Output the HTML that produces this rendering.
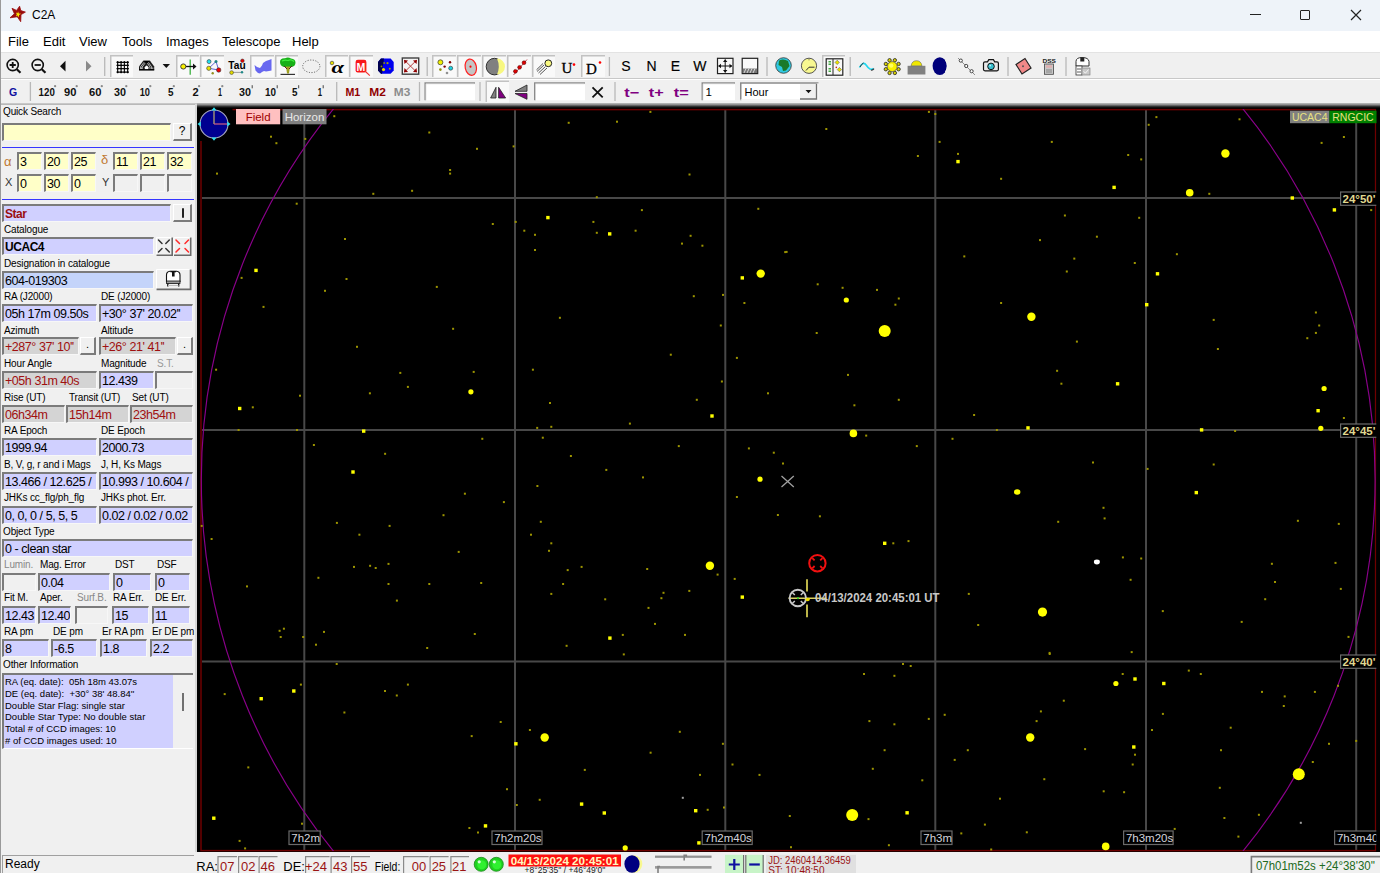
<!DOCTYPE html>
<html><head><meta charset="utf-8">
<style>
*{margin:0;padding:0;box-sizing:border-box}
html,body{width:1380px;height:873px;overflow:hidden;background:#f0f0f0;font-family:"Liberation Sans",sans-serif;position:relative}
.a{position:absolute}
#title{left:0;top:0;width:1380px;height:31px;background:#eef3f9}
#menu{left:0;top:31px;width:1380px;height:21px;background:#fff}
.mi{position:absolute;top:34px;font-size:13px;color:#000}
#tb{left:0;top:52px;width:1380px;height:52px;background:#f0f0f0;border-top:1px solid #e3e3e3}
.sep1{position:absolute;width:1px;background:#b4b4b4}
.lbl{position:absolute;font-size:10px;letter-spacing:-0.15px;color:#000;white-space:nowrap;line-height:12px}
.box{position:absolute;border-top:2px solid #7b7b7b;border-left:2px solid #7b7b7b;border-right:1px solid #f7f7f7;border-bottom:1px solid #f7f7f7;font-size:12.5px;letter-spacing:-0.45px;line-height:16px;padding-left:1px;white-space:nowrap;overflow:hidden;color:#000}
.y{background:#ffffc8}
.b{background:#d0d0ff}
.lb{background:#c4d4fa}
.g{background:#d4d4d4;color:#a01010}
.e{background:#f0f0f0}
.btn{position:absolute;background:#f0f0f0;border-top:1px solid #fff;border-left:1px solid #fff;border-right:2px solid #7b7b7b;border-bottom:2px solid #7b7b7b;font-size:12px;text-align:center;line-height:14px}
.bl{position:absolute;height:1px;background:#3535ff}
#chart{left:197px;top:105px;width:1183px;height:747px;background:#000}
#status{left:0;top:852px;width:1380px;height:21px;background:#f0f0f0}
.sb{position:absolute;top:857px;height:16px;border-top:1px solid #a0a0a0;border-left:1px solid #a0a0a0;background:#f0f0f0;color:#9a1414;font-size:12px;line-height:15px;text-align:right;padding-right:2px}
.st{position:absolute;font-size:12px;color:#000;top:857px;line-height:15px}
</style></head><body>
<!-- title bar -->
<div id="title" class="a"></div>
<svg class="a" style="left:0;top:0" width="34" height="30" viewBox="0 0 34 30"><path d="M19.6 6.2L20.8 10.6L25.4 12.1L21 14.6L20.7 21.7L17.3 16.8L10 17.8L14.4 13.8L12 8.3L16.6 10.4Z" fill="#9a0c0c" stroke="#9a0c0c" stroke-width="0.8" stroke-linejoin="round"/><path d="M18 11.2L18.8 13.4L21.2 13.8L19 15L19 17.4L17.6 15.6L15.8 16.2L16.8 14.4L16 12.6L17.6 13.2Z" fill="#f8e800"/></svg>
<div class="a" style="left:32px;top:8px;font-size:12px;color:#000">C2A</div>
<div class="a" style="left:1250px;top:14px;width:11px;height:1px;background:#222"></div>
<div class="a" style="left:1300px;top:10px;width:10px;height:10px;border:1px solid #222;border-radius:1px"></div>
<svg class="a" style="left:1350px;top:9px" width="12" height="12"><path d="M1 1L11 11M11 1L1 11" stroke="#222" stroke-width="1.2"/></svg>
<!-- menu -->
<div id="menu" class="a"></div>
<div class="mi" style="left:8px">File</div>
<div class="mi" style="left:43px">Edit</div>
<div class="mi" style="left:79px">View</div>
<div class="mi" style="left:122px">Tools</div>
<div class="mi" style="left:166px">Images</div>
<div class="mi" style="left:222px">Telescope</div>
<div class="mi" style="left:292px">Help</div>
<!-- toolbar -->
<div id="tb" class="a"></div>
<div class="a" style="left:0;top:78px;width:1380px;height:1px;background:#c8c8c8"></div>
<div class="a" style="left:0;top:79px;width:1380px;height:1px;background:#fff"></div>
<div class="a" style="left:0;top:103px;width:1380px;height:1px;background:#c8c8c8"></div>
<div class="a" style="left:197px;top:103px;width:1183px;height:5px;background:linear-gradient(#c0c0c0,#8a8a8a 35%,#303030 70%,#000)"></div>
<!--TB--><svg class="a" style="left:0;top:52px" width="1380" height="52" viewBox="0 52 1380 52"><rect x="110" y="55" width="23" height="22" fill="#f9f9f9"/><path d="M110.75 77V55.75H133" stroke="#c2c2c2" stroke-width="1.5" fill="none"/><rect x="176" y="55" width="23" height="22" fill="#f9f9f9"/><path d="M176.75 77V55.75H199" stroke="#c2c2c2" stroke-width="1.5" fill="none"/><rect x="200" y="55" width="24" height="22" fill="#f9f9f9"/><path d="M200.75 77V55.75H224" stroke="#c2c2c2" stroke-width="1.5" fill="none"/><rect x="250" y="55" width="24" height="22" fill="#f9f9f9"/><path d="M250.75 77V55.75H274" stroke="#c2c2c2" stroke-width="1.5" fill="none"/><rect x="275" y="55" width="23" height="22" fill="#f9f9f9"/><path d="M275.75 77V55.75H298" stroke="#c2c2c2" stroke-width="1.5" fill="none"/><rect x="325" y="55" width="23" height="22" fill="#f9f9f9"/><path d="M325.75 77V55.75H348" stroke="#c2c2c2" stroke-width="1.5" fill="none"/><rect x="349" y="55" width="24" height="22" fill="#f9f9f9"/><path d="M349.75 77V55.75H373" stroke="#c2c2c2" stroke-width="1.5" fill="none"/><rect x="432" y="55" width="24" height="22" fill="#f9f9f9"/><path d="M432.75 77V55.75H456" stroke="#c2c2c2" stroke-width="1.5" fill="none"/><rect x="457" y="55" width="24" height="22" fill="#f9f9f9"/><path d="M457.75 77V55.75H481" stroke="#c2c2c2" stroke-width="1.5" fill="none"/><rect x="482" y="55" width="24" height="22" fill="#f9f9f9"/><path d="M482.75 77V55.75H506" stroke="#c2c2c2" stroke-width="1.5" fill="none"/><rect x="507" y="55" width="24" height="22" fill="#f9f9f9"/><path d="M507.75 77V55.75H531" stroke="#c2c2c2" stroke-width="1.5" fill="none"/><rect x="532" y="55" width="23" height="22" fill="#f9f9f9"/><path d="M532.75 77V55.75H555" stroke="#c2c2c2" stroke-width="1.5" fill="none"/><rect x="581" y="55" width="24" height="22" fill="#f9f9f9"/><path d="M581.75 77V55.75H605" stroke="#c2c2c2" stroke-width="1.5" fill="none"/><rect x="822" y="55" width="23" height="22" fill="#f9f9f9"/><path d="M822.75 77V55.75H845" stroke="#c2c2c2" stroke-width="1.5" fill="none"/><rect x="485.5" y="80.5" width="23.5" height="22" fill="#f9f9f9"/><path d="M486.25 102V81.25H509" stroke="#c2c2c2" stroke-width="1.5" fill="none"/><line x1="104.7" y1="57" x2="104.7" y2="76" stroke="#b8b8b8" stroke-width="1.3"/><line x1="427.2" y1="57" x2="427.2" y2="76" stroke="#b8b8b8" stroke-width="1.3"/><line x1="609.4" y1="57" x2="609.4" y2="76" stroke="#b8b8b8" stroke-width="1.3"/><line x1="767" y1="57" x2="767" y2="76" stroke="#b8b8b8" stroke-width="1.3"/><line x1="850.2" y1="57" x2="850.2" y2="76" stroke="#b8b8b8" stroke-width="1.3"/><line x1="1008" y1="57" x2="1008" y2="76" stroke="#b8b8b8" stroke-width="1.3"/><line x1="1066" y1="57" x2="1066" y2="76" stroke="#b8b8b8" stroke-width="1.3"/><line x1="30.4" y1="82" x2="30.4" y2="101" stroke="#b8b8b8" stroke-width="1.3"/><line x1="336.7" y1="82" x2="336.7" y2="101" stroke="#b8b8b8" stroke-width="1.3"/><line x1="419.5" y1="82" x2="419.5" y2="101" stroke="#b8b8b8" stroke-width="1.3"/><line x1="480" y1="82" x2="480" y2="101" stroke="#b8b8b8" stroke-width="1.3"/><line x1="615" y1="82" x2="615" y2="101" stroke="#b8b8b8" stroke-width="1.3"/><circle cx="12.7" cy="65" r="5.6" fill="none" stroke="#111" stroke-width="1.6"/><path d="M16.8 69.2L20.5 72.8" stroke="#111" stroke-width="2.2"/><path d="M9.6 65H15.8M12.7 61.9V68.1" stroke="#111" stroke-width="1.8"/><circle cx="37.7" cy="65" r="5.6" fill="none" stroke="#111" stroke-width="1.6"/><path d="M41.8 69.2L45.5 72.8" stroke="#111" stroke-width="2.2"/><path d="M34.6 65H40.8" stroke="#111" stroke-width="1.8"/><path d="M60 66.2L65.5 60.7V71.6Z" fill="#111"/><path d="M91.5 66.2L86 60.7V71.6Z" fill="#8a8a8a"/><path d="M117.65 61.2V73.2M121.1 61.2V73.2M124.4 61.2V73.2M127.65 61.2V73.2M116.6 62.3H128.8M116.6 65.35H128.8M116.6 68.6H128.8M116.6 72.1H128.8" stroke="#111" stroke-width="1.15" fill="none"/><circle cx="117.65" cy="62.3" r="0.95" fill="#000"/><circle cx="117.65" cy="65.35" r="0.95" fill="#000"/><circle cx="117.65" cy="68.6" r="0.95" fill="#000"/><circle cx="117.65" cy="72.1" r="0.95" fill="#000"/><circle cx="121.1" cy="62.3" r="0.95" fill="#000"/><circle cx="121.1" cy="65.35" r="0.95" fill="#000"/><circle cx="121.1" cy="68.6" r="0.95" fill="#000"/><circle cx="121.1" cy="72.1" r="0.95" fill="#000"/><circle cx="124.4" cy="62.3" r="0.95" fill="#000"/><circle cx="124.4" cy="65.35" r="0.95" fill="#000"/><circle cx="124.4" cy="68.6" r="0.95" fill="#000"/><circle cx="124.4" cy="72.1" r="0.95" fill="#000"/><circle cx="127.65" cy="62.3" r="0.95" fill="#000"/><circle cx="127.65" cy="65.35" r="0.95" fill="#000"/><circle cx="127.65" cy="68.6" r="0.95" fill="#000"/><circle cx="127.65" cy="72.1" r="0.95" fill="#000"/><path d="M139 70.3V66.5L143.2 60.8H150L154.2 66.5V70.3Z" fill="#1c1c1c"/><path d="M140.6 69V66.8L144 62.3M142.2 69V67L145 63.2M151.6 69V66.8L148.4 62.3M150 69V67L147.4 63.2M141.4 69V67.5M152.8 69V67.5" fill="none" stroke="#e8e8e8" stroke-width="0.75"/><path d="M144.8 69.6V67.2Q146.6 63.8 148.4 67.2V69.6Z" fill="#fff"/><path d="M143.3 60.8H150L146.6 63.6Z" fill="#000"/><path d="M139 69.8H154.2" stroke="#000" stroke-width="1.3"/><path d="M162.6 64H170L166.3 68Z" fill="#111"/><line x1="190.2" y1="59.5" x2="190.2" y2="74.7" stroke="#3cb040" stroke-width="1.3"/><path d="M185 66.5H194" stroke="#111" stroke-width="1.3"/><path d="M193 63.5L196.5 66.5L193 69.5Z" fill="#111"/><circle cx="183.3" cy="66.5" r="2.6" fill="#f8f000" stroke="#333" stroke-width="0.9"/><path d="M216 61.5L218.7 70L208.8 68.3Z" fill="none" stroke="#5050d0" stroke-width="0.9"/><circle cx="209" cy="61.6" r="2" fill="#20e0f0" stroke="#333" stroke-width="0.6"/><circle cx="216" cy="61.5" r="1.5" fill="#208080"/><circle cx="208.8" cy="68.3" r="2.1" fill="#e8e000" stroke="#333" stroke-width="0.6"/><circle cx="218.7" cy="70" r="2.2" fill="#f00000" stroke="#333" stroke-width="0.6"/><circle cx="212.7" cy="73.2" r="1.2" fill="#909020"/><text x="228.3" y="69.3" font-family="Liberation Sans" font-weight="bold" font-size="10.5" fill="#000" textLength="17.3" lengthAdjust="spacingAndGlyphs">Tau</text><circle cx="242.4" cy="60.8" r="1.8" fill="#e00000" stroke="#333" stroke-width="0.5"/><path d="M231.6 72.4H242" stroke="#888" stroke-width="0.8"/><circle cx="231.6" cy="72.6" r="1.9" fill="#e0d800" stroke="#333" stroke-width="0.5"/><circle cx="242" cy="72.2" r="1.2" fill="#208888"/><path d="M254.5 65L257 67L260 68L262 65.5L263 63L266 61L269 60L271.5 59V70.5L269 71L266 71.5L264 71L262 72L260 73.5L258 73L255.5 70.5Z" fill="#6868f0"/><path d="M280 62Q280 58 285 58.3Q288 56.8 291 58.5Q295.5 59 295.5 62.5Q295.5 66 292 67L284 67Q280 66 280 62Z" fill="#18b018"/><path d="M282 61Q285 59.5 288 60.5Q291 59 294 61.5" stroke="#40f040" stroke-width="1.2" fill="none"/><path d="M286 66.5L287 73.5H289L290 66.5Z" fill="#a0a020"/><path d="M284 66L287 69M292 66L289 69" stroke="#602020" stroke-width="1"/><line x1="280.5" y1="74.4" x2="295" y2="74.4" stroke="#333" stroke-width="1.2"/><ellipse cx="311.3" cy="66.3" rx="8.6" ry="6.3" fill="none" stroke="#444" stroke-width="0.9" stroke-dasharray="1 1.6"/><circle cx="332" cy="63" r="1.8" fill="#e8e000" stroke="#333" stroke-width="0.6"/><text x="331.5" y="72.5" font-family="Liberation Serif" font-style="italic" font-weight="bold" font-size="17" fill="#000" textLength="12.5" lengthAdjust="spacingAndGlyphs">α</text><rect x="355.6" y="59.8" width="10.8" height="12.6" rx="2.2" fill="#f81818"/><text x="356.6" y="71" font-family="Liberation Sans" font-weight="bold" font-size="11" fill="#fff" textLength="8.8" lengthAdjust="spacingAndGlyphs">M</text><path d="M365 71L369.8 75.6" stroke="#f03030" stroke-width="1.1"/><path d="M381 58.5H390.6L393.7 62V70.4L390.6 73.7H381L378 70.4V62Z" fill="#0000ee"/><path d="M381 58.5H384L382 73.7H381L378 70.4V62Z" fill="#000050"/><circle cx="383.5" cy="69.6" r="1.6" fill="#e8e000"/><circle cx="387.5" cy="63.2" r="1.1" fill="#a0a000"/><circle cx="389.8" cy="68.8" r="1" fill="#a0a000"/><circle cx="381.5" cy="66.4" r="0.9" fill="#909000"/><circle cx="384.2" cy="63" r="0.9" fill="#909000"/><rect x="402.3" y="58" width="16.4" height="16.2" fill="#f4f4f4" stroke="#404040" stroke-width="1.4"/><path d="M404.5 60.3L416.5 72M416.5 60.3L404.5 72" stroke="#b03030" stroke-width="0.9"/><path d="M404 60L408 60.5L404.5 64ZM417 60L413 60.5L416.5 64ZM404 72.3L408 72L404.5 68ZM417 72.3L413 72L416.5 68Z" fill="#900000"/><circle cx="440.4" cy="62.3" r="2.5" fill="#f0f000" stroke="#333" stroke-width="0.7"/><circle cx="450" cy="62.3" r="1.2" fill="#800000"/><circle cx="444.6" cy="66.6" r="1.2" fill="#800000"/><circle cx="450.7" cy="68.2" r="2" fill="#20d0e0" stroke="#333" stroke-width="0.6"/><circle cx="440.4" cy="69.6" r="1.3" fill="#909010"/><circle cx="447" cy="73" r="1.3" fill="#909090"/><ellipse cx="470.8" cy="67.2" rx="5.6" ry="8.2" transform="rotate(-12 470.8 67.2)" fill="#c4c4c4" stroke="#ff2020" stroke-width="1.2"/><circle cx="470.5" cy="66.7" r="1.1" fill="#f00"/><circle cx="494.5" cy="66.6" r="8.3" fill="#808080" stroke="#303030" stroke-width="1"/><path d="M497 58.6A8 8 0 0 1 497 74.6Q500.5 66.6 497 58.6Z" fill="#f8f880"/><path d="M513.5 75L527 59.5" stroke="#c03040" stroke-width="0.9"/><circle cx="515.4" cy="71.3" r="1.9" fill="#e00000" stroke="#400" stroke-width="0.5"/><circle cx="519.6" cy="67.3" r="1.9" fill="#e00000" stroke="#400" stroke-width="0.5"/><circle cx="524" cy="62.7" r="1.9" fill="#e00000" stroke="#400" stroke-width="0.5"/><path d="M544 65L537 71.5M545.5 66.5L538.5 73M547 68L540 74.5M543 63.5L536.5 69.8" stroke="#444" stroke-width="0.9"/><circle cx="548.3" cy="63.3" r="3.4" fill="#f8f880" stroke="#222" stroke-width="1"/><text x="561.5" y="72.6" font-family="Liberation Serif" font-size="15" fill="#000" stroke="#000" stroke-width="0.3">U</text><circle cx="574" cy="64.6" r="1.3" fill="#f00"/><text x="586" y="73.7" font-family="Liberation Serif" font-size="15" fill="#000" stroke="#000" stroke-width="0.3">D</text><circle cx="600" cy="62.5" r="1.3" fill="#f00"/><text x="621.3" y="71.2" font-family="Liberation Sans" font-size="14" fill="#000" stroke="#000" stroke-width="0.15">S</text><text x="646.4" y="71.2" font-family="Liberation Sans" font-size="14" fill="#000" stroke="#000" stroke-width="0.15">N</text><text x="670.8" y="71.2" font-family="Liberation Sans" font-size="14" fill="#000" stroke="#000" stroke-width="0.15">E</text><text x="693.3" y="71.2" font-family="Liberation Sans" font-size="14" fill="#000" stroke="#000" stroke-width="0.15">W</text><rect x="717.5" y="58.3" width="15.5" height="15.3" fill="#f8f8f8" stroke="#222" stroke-width="1.2"/><path d="M725.2 59.5V72.5M718.5 66H732" stroke="#111" stroke-width="1"/><path d="M725.2 59.3L723 62H727.4ZM725.2 72.7L723 70H727.4ZM718.3 66L721 63.8V68.2ZM732.2 66L729.5 63.8V68.2Z" fill="#111"/><rect x="742.2" y="58.3" width="15.5" height="15.3" fill="#f8f8f8" stroke="#222" stroke-width="1.2"/><rect x="742.8" y="68.5" width="14.3" height="4.5" fill="#777"/><path d="M744 73L746 68.5M747 73L749 68.5M750 73L752 68.5M753 73L755 68.5" stroke="#eee" stroke-width="0.8"/><circle cx="783.5" cy="65.5" r="7.8" fill="#30c8e0" stroke="#333" stroke-width="0.8"/><path d="M780 60Q784 58.5 788 61L789.5 66L786 70.5L783 71L782 67L778.5 65L779 61Z" fill="#1a7a2a"/><circle cx="809" cy="65.8" r="7.6" fill="#f8f890" stroke="#555" stroke-width="1"/><path d="M806 70.5L809 67.2H814.5" stroke="#333" stroke-width="1" fill="none"/><circle cx="809" cy="59.8" r="0.5" fill="#333"/><rect x="826.2" y="58.8" width="16.6" height="16.4" fill="#f8f8f8" stroke="#222" stroke-width="1.2"/><line x1="833" y1="59" x2="833" y2="75" stroke="#222" stroke-width="1"/><path d="M828.5 61.5H831M828.5 63H831M828.5 64.5H831M828.5 68.5H831M828.5 70H831M828.5 71.5H831" stroke="#30a030" stroke-width="0.9"/><path d="M837.2 60.2L839.4 62.4L837.2 64.6L835 62.4Z M839.4 67.4L841.6 69.6L839.4 71.8L837.2 69.6Z" fill="#e8e000" stroke="#555" stroke-width="0.5"/><circle cx="836.3" cy="67.4" r="0.8" fill="#c02020"/><path d="M859.5 67.5Q863 60.5 866.5 65.5Q870 71 873.5 68.5" fill="none" stroke="#20d8f0" stroke-width="1.6"/><path d="M871 70Q872.5 70.5 874 68.7" fill="none" stroke="#333" stroke-width="1.3"/><path d="M860 67Q861.5 64 863.5 63" fill="none" stroke="#333" stroke-width="1"/><circle cx="898.57" cy="69.24" r="1.7" fill="#d8d000" stroke="#222" stroke-width="0.8"/><circle cx="894.84" cy="72.97" r="1.7" fill="#d8d000" stroke="#222" stroke-width="0.8"/><circle cx="889.56" cy="72.97" r="1.7" fill="#d8d000" stroke="#222" stroke-width="0.8"/><circle cx="885.83" cy="69.24" r="1.7" fill="#d8d000" stroke="#222" stroke-width="0.8"/><circle cx="885.83" cy="63.96" r="1.7" fill="#d8d000" stroke="#222" stroke-width="0.8"/><circle cx="889.56" cy="60.23" r="1.7" fill="#d8d000" stroke="#222" stroke-width="0.8"/><circle cx="894.84" cy="60.23" r="1.7" fill="#d8d000" stroke="#222" stroke-width="0.8"/><circle cx="898.57" cy="63.96" r="1.7" fill="#d8d000" stroke="#222" stroke-width="0.8"/><circle cx="892.2" cy="66.6" r="5" fill="#f8f000" stroke="#444" stroke-width="0.7"/><circle cx="891.2" cy="65.6" r="2.2" fill="#ffff60"/><rect x="907.6" y="65.8" width="17.8" height="8.7" fill="#808080"/><path d="M911 65.8Q912 60.7 916.5 60.7Q921 60.7 922 65.8Z" fill="#f0e800" stroke="#555" stroke-width="0.5"/><ellipse cx="939.8" cy="66.1" rx="7.2" ry="8.9" fill="#00007a"/><path d="M945.5 60Q949 66 945.5 72" stroke="#f8f8f0" stroke-width="1" fill="none"/><path d="M958 58L975 75" stroke="#666" stroke-width="0.7"/><circle cx="960.8" cy="60.6" r="1.6" fill="#fff" stroke="#333" stroke-width="0.9"/><circle cx="966.2" cy="66" r="1.6" fill="#fff" stroke="#333" stroke-width="0.9"/><circle cx="971.6" cy="71.2" r="1.6" fill="#fff" stroke="#333" stroke-width="0.9"/><path d="M983.5 63.2Q983.5 61.8 985 61.8H987.5L988.8 59.6H993.4L994.7 61.8H997Q998.4 61.8 998.4 63.2V69.6Q998.4 70.8 997 70.8H985Q983.5 70.8 983.5 69.6Z" fill="#e8e8e8" stroke="#111" stroke-width="1.2"/><circle cx="991" cy="66.4" r="3.3" fill="#38c0d0" stroke="#111" stroke-width="1"/><circle cx="990.2" cy="65.6" r="0.9" fill="#b8f0f8"/><path d="M1016 64.5L1025 58.5L1031 68L1022 74Z" fill="#f08888" stroke="#222" stroke-width="1.2"/><circle cx="1023" cy="66.3" r="1" fill="#555"/><text x="1042.5" y="62.5" font-family="Liberation Sans" font-weight="bold" font-size="4.8" fill="#222" textLength="13.5" lengthAdjust="spacingAndGlyphs">DSS</text><rect x="1044.5" y="64" width="9" height="10.3" fill="#c8c8c8" stroke="#444" stroke-width="0.8"/><rect x="1046" y="65.3" width="6" height="2.5" fill="#e0b0b0"/><path d="M1046 70H1052M1046 72H1052" stroke="#555" stroke-width="0.6"/><path d="M1076 61.5Q1076 57.5 1082 57.5Q1088.5 57.5 1089 61.5V66H1076Z" fill="#fff" stroke="#333" stroke-width="1"/><rect x="1080.3" y="57.5" width="4" height="4" fill="#222"/><rect x="1076" y="66" width="6" height="9" fill="#fff" stroke="#333" stroke-width="0.8"/><rect x="1082" y="68" width="8" height="7" fill="#c8c8c8" stroke="#777" stroke-width="0.6"/><path d="M1083.5 71.5L1085.5 73L1088.5 69.5" stroke="#fff" stroke-width="0.8" fill="none"/><path d="M1077 69H1081M1077 72H1081" stroke="#333" stroke-width="0.8"/><text x="9" y="96" font-family="Liberation Sans" font-weight="bold" font-size="10.5" fill="#1010a0">G</text><text x="38.6" y="96.2" font-family="Liberation Sans" font-weight="bold" font-size="10.3" fill="#111" textLength="16.2" lengthAdjust="spacingAndGlyphs">120</text><circle cx="55.1" cy="86.2" r="1.15" fill="#8a8a8a"/><text x="64" y="96.2" font-family="Liberation Sans" font-weight="bold" font-size="10.3" fill="#111" textLength="12.4" lengthAdjust="spacingAndGlyphs">90</text><circle cx="76.7" cy="86.2" r="1.15" fill="#8a8a8a"/><text x="89" y="96.2" font-family="Liberation Sans" font-weight="bold" font-size="10.3" fill="#111" textLength="12.5" lengthAdjust="spacingAndGlyphs">60</text><circle cx="101.8" cy="86.2" r="1.15" fill="#8a8a8a"/><text x="114" y="96.2" font-family="Liberation Sans" font-weight="bold" font-size="10.3" fill="#111" textLength="12" lengthAdjust="spacingAndGlyphs">30</text><circle cx="126.3" cy="86.2" r="1.15" fill="#8a8a8a"/><text x="139.7" y="96.2" font-family="Liberation Sans" font-weight="bold" font-size="10.3" fill="#111" textLength="10.3" lengthAdjust="spacingAndGlyphs">10</text><circle cx="150.3" cy="86.2" r="1.15" fill="#8a8a8a"/><text x="168" y="96.2" font-family="Liberation Sans" font-weight="bold" font-size="10.3" fill="#111" textLength="5.5" lengthAdjust="spacingAndGlyphs">5</text><circle cx="173.8" cy="86.2" r="1.15" fill="#8a8a8a"/><text x="192.6" y="96.2" font-family="Liberation Sans" font-weight="bold" font-size="10.3" fill="#111" textLength="6.2" lengthAdjust="spacingAndGlyphs">2</text><circle cx="199.1" cy="86.2" r="1.15" fill="#8a8a8a"/><text x="218" y="96.2" font-family="Liberation Sans" font-weight="bold" font-size="10.3" fill="#111" textLength="4" lengthAdjust="spacingAndGlyphs">1</text><circle cx="222.3" cy="86.2" r="1.15" fill="#8a8a8a"/><text x="239" y="96.2" font-family="Liberation Sans" font-weight="bold" font-size="10.3" fill="#111" textLength="12" lengthAdjust="spacingAndGlyphs">30</text><path d="M252.2 85.2V88.3" stroke="#333" stroke-width="0.9"/><text x="265" y="96.2" font-family="Liberation Sans" font-weight="bold" font-size="10.3" fill="#111" textLength="11" lengthAdjust="spacingAndGlyphs">10</text><path d="M277.2 85.2V88.3" stroke="#333" stroke-width="0.9"/><text x="292" y="96.2" font-family="Liberation Sans" font-weight="bold" font-size="10.3" fill="#111" textLength="5.5" lengthAdjust="spacingAndGlyphs">5</text><path d="M298.7 85.2V88.3" stroke="#333" stroke-width="0.9"/><text x="317.7" y="96.2" font-family="Liberation Sans" font-weight="bold" font-size="10.3" fill="#111" textLength="4.3" lengthAdjust="spacingAndGlyphs">1</text><path d="M323.2 85.2V88.3" stroke="#333" stroke-width="0.9"/><text x="345.5" y="96.3" font-family="Liberation Sans" font-weight="bold" font-size="10.3" fill="#900000" textLength="14.8" lengthAdjust="spacingAndGlyphs">M1</text><text x="369.2" y="96.3" font-family="Liberation Sans" font-weight="bold" font-size="10.3" fill="#900000" textLength="16.6" lengthAdjust="spacingAndGlyphs">M2</text><text x="393.8" y="96.3" font-family="Liberation Sans" font-weight="bold" font-size="10.3" fill="#8c8c8c" textLength="16.5" lengthAdjust="spacingAndGlyphs">M3</text><rect x="424.4" y="82.3" width="50.60000000000002" height="18" fill="#fff"/><path d="M425.15 100.3V83.05H475" stroke="#8a8a8a" stroke-width="1.5" fill="none"/><path d="M425.9 100.3V83.8H474.5" stroke="#d8d8d8" stroke-width="0.7" fill="none"/><rect x="534" y="82.3" width="51" height="18" fill="#fff"/><path d="M534.75 100.3V83.05H585" stroke="#8a8a8a" stroke-width="1.5" fill="none"/><path d="M535.5 100.3V83.8H584.5" stroke="#d8d8d8" stroke-width="0.7" fill="none"/><rect x="701.5" y="82.3" width="33.5" height="18" fill="#fff"/><path d="M702.25 100.3V83.05H735" stroke="#8a8a8a" stroke-width="1.5" fill="none"/><path d="M703.0 100.3V83.8H734.5" stroke="#d8d8d8" stroke-width="0.7" fill="none"/><path d="M490.6 98L496 87.3V98Z" fill="#808080" stroke="#222" stroke-width="0.8"/><path d="M498.6 98V87.3L505.6 98Z" fill="#800080" stroke="#222" stroke-width="0.8"/><path d="M515 91.3L527 85V91.3Z" fill="#808080" stroke="#222" stroke-width="0.8"/><path d="M515 93.5H527V99.3Z" fill="#800080" stroke="#222" stroke-width="0.8"/><path d="M592.5 87.3L602.7 97.3M602.7 87.3L592.5 97.3" stroke="#111" stroke-width="1.8"/><text x="624.3" y="97" font-family="Liberation Sans" font-weight="bold" font-size="13" fill="#800080" textLength="15" lengthAdjust="spacingAndGlyphs">t−</text><text x="648.8" y="97" font-family="Liberation Sans" font-weight="bold" font-size="13" fill="#800080" textLength="15" lengthAdjust="spacingAndGlyphs">t+</text><text x="673.8" y="97" font-family="Liberation Sans" font-weight="bold" font-size="13" fill="#800080" textLength="15" lengthAdjust="spacingAndGlyphs">t=</text><text x="705.5" y="96" font-family="Liberation Sans" font-size="11.5" fill="#000">1</text><rect x="740" y="82.3" width="78.5" height="18" fill="#fff"/><path d="M740.75 100.3V83.05H818.5" stroke="#8a8a8a" stroke-width="1.5" fill="none"/><path d="M818 83V100M740.5 99.8H818" stroke="#f0f0f0" stroke-width="1"/><rect x="800" y="84" width="17" height="15" fill="#f0f0f0"/><path d="M816.5 84V99H800" stroke="#707070" stroke-width="1.3" fill="none"/><path d="M805.5 90H811.5L808.5 93.2Z" fill="#111"/><text x="744.5" y="96" font-family="Liberation Sans" font-size="11" fill="#000">Hour</text></svg><!--/TB-->

<!-- left panel -->
<div class="a" style="left:0;top:104px;width:197px;height:748px;background:#f0f0f0;border-top:1px solid #b9b9b9"></div>
<div class="a" style="left:0;top:0;width:1px;height:873px;background:#9a9a9a"></div>
<div class="a" style="left:195px;top:104px;width:2px;height:748px;background:#d8d8d8"></div>

<div class="lbl" style="left:3px;top:106px">Quick Search</div>
<div class="box y" style="left:2px;top:123px;width:169px;height:18px"></div>
<div class="btn" style="left:173px;top:123px;width:19px;height:18px">?</div>
<div class="bl" style="left:2px;top:147px;width:192px"></div>
<div class="a" style="left:4px;top:154px;font-size:13px;color:#c07830">α</div>
<div class="box y" style="left:17px;top:152px;width:25px;height:18px">3</div>
<div class="box y" style="left:44px;top:152px;width:25px;height:18px">20</div>
<div class="box y" style="left:71px;top:152px;width:25px;height:18px">25</div>
<div class="a" style="left:101px;top:152px;font-size:13px;color:#c07830">δ</div>
<div class="box y" style="left:113px;top:152px;width:25px;height:18px">11</div>
<div class="box y" style="left:140px;top:152px;width:25px;height:18px">21</div>
<div class="box y" style="left:167px;top:152px;width:25px;height:18px">32</div>
<div class="lbl" style="left:5px;top:176px;font-size:11px;color:#333">X</div>
<div class="box y" style="left:17px;top:174px;width:25px;height:18px">0</div>
<div class="box y" style="left:44px;top:174px;width:25px;height:18px">30</div>
<div class="box y" style="left:71px;top:174px;width:25px;height:18px">0</div>
<div class="lbl" style="left:102px;top:176px;font-size:11px;color:#333">Y</div>
<div class="box e" style="left:113px;top:174px;width:25px;height:18px"></div>
<div class="box e" style="left:140px;top:174px;width:25px;height:18px"></div>
<div class="box e" style="left:167px;top:174px;width:25px;height:18px"></div>
<div class="bl" style="left:2px;top:199px;width:192px"></div>
<div class="box b" style="left:2px;top:204px;width:169px;height:18px;font-weight:bold;color:#9a0f0f;font-size:12px">Star</div>
<div class="btn" style="left:173px;top:204px;width:19px;height:18px"><div class="a" style="left:8px;top:3px;width:1.6px;height:9.5px;background:#222;border-radius:1px"></div></div>
<div class="lbl" style="left:4px;top:224px;">Catalogue</div>
<div class="box b" style="left:2px;top:237px;width:152px;height:18px;font-weight:bold;font-size:12px">UCAC4</div>
<div class="lbl" style="left:4px;top:258px;">Designation in catalogue</div>
<div class="box lb" style="left:2px;top:271px;width:152px;height:18px;">604-019303</div>
<div class="lbl" style="left:4px;top:291px;">RA (J2000)</div>
<div class="lbl" style="left:101px;top:291px;">DE (J2000)</div>
<div class="box b" style="left:2px;top:304px;width:95px;height:18px;">05h 17m 09.50s</div>
<div class="box b" style="left:99px;top:304px;width:94px;height:18px;">+30° 37' 20.02''</div>
<div class="lbl" style="left:4px;top:325px;">Azimuth</div>
<div class="lbl" style="left:101px;top:325px;">Altitude</div>
<div class="box g" style="left:2px;top:337px;width:77px;height:18px;">+287° 37' 10''</div>
<div class="btn" style="left:80px;top:337px;width:16px;height:18px;font-size:11px;line-height:13px">.</div>
<div class="box g" style="left:99px;top:337px;width:77px;height:18px;">+26° 21' 41''</div>
<div class="btn" style="left:177px;top:337px;width:16px;height:18px;font-size:11px;line-height:13px">.</div>
<div class="lbl" style="left:4px;top:358px;">Hour Angle</div>
<div class="lbl" style="left:101px;top:358px;">Magnitude</div>
<div class="lbl" style="left:157px;top:358px;color:#999">S.T.</div>
<div class="box g" style="left:2px;top:371px;width:95px;height:18px;">+05h 31m 40s</div>
<div class="box b" style="left:99px;top:371px;width:55px;height:18px;">12.439</div>
<div class="box e" style="left:155px;top:371px;width:38px;height:18px;"></div>
<div class="lbl" style="left:4px;top:392px;">Rise (UT)</div>
<div class="lbl" style="left:69px;top:392px;">Transit (UT)</div>
<div class="lbl" style="left:132px;top:392px;">Set (UT)</div>
<div class="box g" style="left:2px;top:405px;width:63px;height:18px;">06h34m</div>
<div class="box g" style="left:66px;top:405px;width:63px;height:18px;">15h14m</div>
<div class="box g" style="left:130px;top:405px;width:63px;height:18px;">23h54m</div>
<div class="lbl" style="left:4px;top:425px;">RA Epoch</div>
<div class="lbl" style="left:101px;top:425px;">DE Epoch</div>
<div class="box b" style="left:2px;top:438px;width:95px;height:18px;">1999.94</div>
<div class="box b" style="left:99px;top:438px;width:94px;height:18px;">2000.73</div>
<div class="lbl" style="left:4px;top:459px;">B, V, g, r and i Mags</div>
<div class="lbl" style="left:101px;top:459px;">J, H, Ks Mags</div>
<div class="box b" style="left:2px;top:472px;width:95px;height:18px;">13.466 / 12.625 /</div>
<div class="box b" style="left:99px;top:472px;width:94px;height:18px;">10.993 / 10.604 /</div>
<div class="lbl" style="left:4px;top:492px;">JHKs cc_flg/ph_flg</div>
<div class="lbl" style="left:101px;top:492px;">JHKs phot. Err.</div>
<div class="box b" style="left:2px;top:506px;width:95px;height:18px;">0, 0, 0 / 5, 5, 5</div>
<div class="box b" style="left:99px;top:506px;width:94px;height:18px;">0.02 / 0.02 / 0.02</div>
<div class="lbl" style="left:3px;top:526px;">Object Type</div>
<div class="box b" style="left:2px;top:539px;width:191px;height:18px;">0 - clean star</div>
<div class="lbl" style="left:4px;top:559px;color:#888">Lumin.</div>
<div class="lbl" style="left:40px;top:559px;">Mag. Error</div>
<div class="lbl" style="left:115px;top:559px;">DST</div>
<div class="lbl" style="left:157px;top:559px;">DSF</div>
<div class="box e" style="left:2px;top:573px;width:34px;height:18px;"></div>
<div class="box b" style="left:38px;top:573px;width:72px;height:18px;">0.04</div>
<div class="box b" style="left:113px;top:573px;width:38px;height:18px;">0</div>
<div class="box b" style="left:155px;top:573px;width:35px;height:18px;">0</div>
<div class="lbl" style="left:4px;top:592px;">Fit M.</div>
<div class="lbl" style="left:40px;top:592px;">Aper.</div>
<div class="lbl" style="left:77px;top:592px;color:#888">Surf.B.</div>
<div class="lbl" style="left:113px;top:592px;">RA Err.</div>
<div class="lbl" style="left:155px;top:592px;">DE Err.</div>
<div class="box b" style="left:2px;top:606px;width:34px;height:18px;">12.43</div>
<div class="box b" style="left:38px;top:606px;width:33px;height:18px;">12.40</div>
<div class="box e" style="left:75px;top:606px;width:33px;height:18px;"></div>
<div class="box b" style="left:112px;top:606px;width:37px;height:18px;">15</div>
<div class="box b" style="left:152px;top:606px;width:38px;height:18px;">11</div>
<div class="lbl" style="left:4px;top:626px;">RA pm</div>
<div class="lbl" style="left:53px;top:626px;">DE pm</div>
<div class="lbl" style="left:102px;top:626px;">Er RA pm</div>
<div class="lbl" style="left:152px;top:626px;">Er DE pm</div>
<div class="box b" style="left:2px;top:639px;width:47px;height:18px;">8</div>
<div class="box b" style="left:51px;top:639px;width:46px;height:18px;">-6.5</div>
<div class="box b" style="left:100px;top:639px;width:47px;height:18px;">1.8</div>
<div class="box b" style="left:150px;top:639px;width:43px;height:18px;">2.2</div>
<div class="lbl" style="left:3px;top:659px;">Other Information</div>
<svg class="a" style="left:150px;top:230px" width="46" height="65" viewBox="150 230 46 65">
<path d="M156.5 255.7V237.5H172.5" stroke="#fff" stroke-width="1" fill="none"/><path d="M172.2 237.5V255.2H156.5" stroke="#6a6a6a" stroke-width="1.6" fill="none"/>
<path d="M174 255.7V237.5H191" stroke="#fff" stroke-width="1" fill="none"/><path d="M190.7 237.5V255.2H174" stroke="#6a6a6a" stroke-width="1.6" fill="none"/>
<path d="M158.5 240L162 243.5M169.3 240L165.8 243.5M158.5 252L162 248.5M169.3 252L165.8 248.5" stroke="#333" stroke-width="1.5" stroke-linecap="round"/>
<path d="M176 240L179.5 243.5M188.5 240L185 243.5M176 252L179.5 248.5M188.5 252L185 248.5" stroke="#ff2a2a" stroke-width="1.5" stroke-linecap="round"/>
<path d="M156.5 290V269.5H191" stroke="#fff" stroke-width="1" fill="none"/><path d="M190.6 269.5V289.3H156.5" stroke="#6a6a6a" stroke-width="1.8" fill="none"/>
<path d="M166.5 281.5V275Q166.5 271.5 170 271.2H176.5Q180 271.5 180 275V281.5Z" fill="#fff" stroke="#111" stroke-width="1.1"/>
<rect x="172" y="271" width="2.6" height="5.5" fill="#111"/><rect x="170.5" y="271" width="5.5" height="1.3" fill="#111"/>
<rect x="166.5" y="281" width="13.5" height="2.5" fill="#9a9a9a" stroke="#111" stroke-width="0.8"/>
<path d="M167.8 283.5V286.5M178.7 283.5V286.5" stroke="#111" stroke-width="1.3"/><path d="M168 285.5H178.5" stroke="#bbb" stroke-width="1"/>
</svg>
<div class="a" style="left:2px;top:673px;width:191px;height:76px;border-top:2px solid #7b7b7b;border-left:2px solid #7b7b7b;border-bottom:1px solid #fff;background:#f0f0f0"></div>
<div class="a" style="left:4px;top:675px;width:169px;height:73px;background:#d0d0ff"></div>
<div class="a" style="left:182px;top:693px;width:2px;height:18px;background:#707070"></div>
<div class="a" style="left:5px;top:676px;font-size:9.5px;line-height:11.8px;color:#000;white-space:pre">RA (eq. date):  05h 18m 43.07s
DE (eq. date):  +30° 38' 48.84''
Double Star Flag: single star
Double Star Type: No double star
Total # of CCD images: 10
# of CCD images used: 10</div>
<div class="a" style="left:2px;top:855px;width:192px;height:18px;border-top:1px solid #a0a0a0;border-left:1px solid #a0a0a0"></div>
<div class="a" style="left:5px;top:857px;font-size:12px;color:#000">Ready</div>


<!-- chart -->
<!--CH--><svg class="a" style="left:197px;top:105px" width="1183" height="747" viewBox="197 105 1183 747"><defs><clipPath id="cb"><rect x="200" y="109" width="1176.5" height="742"/></clipPath></defs><rect x="197" y="108" width="1183" height="744" fill="#000"/><path d="M304.3 110V850M515 110V850M725.3 110V850M935.3 110V850M1146 110V850M1356.2 110V850M202 198H1375M202 430H1375M202 661.6H1375" stroke="#484848" stroke-width="2" fill="none"/><rect x="201" y="109.6" width="1174.6" height="741" fill="none" stroke="#6e0000" stroke-width="1.5"/><g clip-path="url(#cb)"><circle cx="788.2" cy="480" r="586.9" fill="none" stroke="#8a008a" stroke-width="1.15"/></g><rect x="333.3" y="115.2" width="2" height="2" fill="#9c9400"/><rect x="270.0" y="135.7" width="2" height="2" fill="#9c9400"/><rect x="275.4" y="142.2" width="2" height="2" fill="#9c9400"/><rect x="304.3" y="137.9" width="2" height="2" fill="#9c9400"/><rect x="216.0" y="172.6" width="2" height="2" fill="#9c9400"/><rect x="428.3" y="131.5" width="2" height="2" fill="#9c9400"/><rect x="476.0" y="147.8" width="2" height="2" fill="#9c9400"/><rect x="449.1" y="169.0" width="2" height="2" fill="#9c9400"/><rect x="449.1" y="172.6" width="2" height="2" fill="#9c9400"/><rect x="411.1" y="189.8" width="2" height="2" fill="#9c9400"/><rect x="372.3" y="192.8" width="2" height="2" fill="#9c9400"/><rect x="295.7" y="202.7" width="2" height="2" fill="#9c9400"/><rect x="344.0" y="238.0" width="2" height="2" fill="#9c9400"/><rect x="254.3" y="268.7" width="3.4" height="3.4" fill="#ffff00"/><rect x="240.6" y="276.9" width="2" height="2" fill="#9c9400"/><rect x="345.5" y="278.0" width="2" height="2" fill="#9c9400"/><rect x="324.0" y="289.8" width="2" height="2" fill="#9c9400"/><rect x="435.8" y="285.9" width="2" height="2" fill="#9c9400"/><rect x="649.4" y="110.9" width="2" height="2" fill="#9c9400"/><rect x="567.7" y="121.8" width="2" height="2" fill="#9c9400"/><rect x="616.0" y="120.7" width="2" height="2" fill="#9c9400"/><rect x="512.6" y="145.4" width="2" height="2" fill="#9c9400"/><rect x="688.5" y="173.5" width="2" height="2" fill="#9c9400"/><rect x="595.8" y="196.2" width="2" height="2" fill="#9c9400"/><rect x="640.9" y="209.1" width="2" height="2" fill="#9c9400"/><rect x="546.2" y="215.9" width="3.4" height="3.4" fill="#ffff00"/><rect x="491.8" y="223.0" width="2" height="2" fill="#9c9400"/><rect x="514.7" y="220.9" width="2" height="2" fill="#9c9400"/><rect x="523.3" y="229.7" width="2" height="2" fill="#9c9400"/><rect x="534.0" y="233.8" width="2" height="2" fill="#9c9400"/><rect x="534.0" y="249.0" width="2" height="2" fill="#9c9400"/><rect x="592.4" y="220.9" width="2" height="2" fill="#9c9400"/><rect x="595.8" y="231.8" width="2" height="2" fill="#9c9400"/><rect x="608.0" y="232.2" width="3.4" height="3.4" fill="#ffff00"/><rect x="634.6" y="229.7" width="2" height="2" fill="#9c9400"/><rect x="757.3" y="207.8" width="2" height="2" fill="#9c9400"/><rect x="689.6" y="234.8" width="2" height="2" fill="#9c9400"/><rect x="681.0" y="242.6" width="2" height="2" fill="#9c9400"/><rect x="701.4" y="244.7" width="2" height="2" fill="#9c9400"/><rect x="784.2" y="251.1" width="2" height="2" fill="#9c9400"/><rect x="740.6" y="276.2" width="3.4" height="3.4" fill="#ffff00"/><circle cx="760.7" cy="273.6" r="4.2" fill="#ffff00"/><rect x="927.9" y="110.9" width="2" height="2" fill="#9c9400"/><rect x="934.3" y="113.0" width="2" height="2" fill="#9c9400"/><rect x="825.3" y="128.0" width="2" height="2" fill="#9c9400"/><rect x="938.6" y="140.9" width="2" height="2" fill="#9c9400"/><rect x="1050.8" y="140.9" width="2" height="2" fill="#9c9400"/><rect x="916.9" y="155.0" width="2" height="2" fill="#9c9400"/><rect x="957.0" y="152.9" width="2" height="2" fill="#9c9400"/><rect x="956.3" y="159.9" width="3.4" height="3.4" fill="#ffff00"/><rect x="1000.1" y="177.8" width="2" height="2" fill="#9c9400"/><rect x="1063.9" y="214.5" width="2" height="2" fill="#9c9400"/><rect x="785.6" y="250.9" width="2" height="2" fill="#9c9400"/><rect x="1039.0" y="239.1" width="2" height="2" fill="#9c9400"/><rect x="963.3" y="255.4" width="2" height="2" fill="#9c9400"/><rect x="1073.3" y="257.6" width="2" height="2" fill="#9c9400"/><rect x="1065.8" y="270.5" width="2" height="2" fill="#9c9400"/><rect x="816.7" y="283.3" width="2" height="2" fill="#9c9400"/><rect x="841.6" y="286.8" width="2" height="2" fill="#9c9400"/><rect x="876.0" y="288.9" width="2" height="2" fill="#9c9400"/><rect x="1155.4" y="116.1" width="2" height="2" fill="#9c9400"/><rect x="1147.7" y="123.8" width="2" height="2" fill="#9c9400"/><rect x="1238.5" y="118.3" width="2" height="2" fill="#9c9400"/><rect x="1127.2" y="154.0" width="2" height="2" fill="#9c9400"/><rect x="1140.2" y="158.4" width="2" height="2" fill="#9c9400"/><circle cx="1225.4" cy="153.5" r="4.2" fill="#ffff00"/><rect x="1112.4" y="185.7" width="3.4" height="3.4" fill="#ffff00"/><circle cx="1189.7" cy="192.7" r="3.8" fill="#ffff00"/><rect x="1208.3" y="192.8" width="2" height="2" fill="#9c9400"/><rect x="1290.6" y="196.3" width="3.4" height="3.4" fill="#ffff00"/><rect x="1332.7" y="208.2" width="3.4" height="3.4" fill="#ffff00"/><rect x="1342.9" y="136.0" width="2" height="2" fill="#9c9400"/><rect x="1320.6" y="141.9" width="2" height="2" fill="#9c9400"/><rect x="1370.2" y="209.1" width="2" height="2" fill="#9c9400"/><rect x="1138.2" y="216.8" width="2" height="2" fill="#9c9400"/><rect x="1095.9" y="235.7" width="2" height="2" fill="#9c9400"/><rect x="1175.9" y="253.2" width="2" height="2" fill="#9c9400"/><rect x="1133.8" y="262.0" width="2" height="2" fill="#9c9400"/><rect x="1155.8" y="272.1" width="3.4" height="3.4" fill="#ffff00"/><rect x="262.5" y="305.9" width="2" height="2" fill="#9c9400"/><rect x="215.1" y="368.7" width="2" height="2" fill="#9c9400"/><rect x="356.0" y="345.8" width="2" height="2" fill="#9c9400"/><rect x="452.1" y="327.8" width="2" height="2" fill="#9c9400"/><rect x="399.3" y="371.9" width="2" height="2" fill="#9c9400"/><rect x="472.7" y="370.9" width="2" height="2" fill="#9c9400"/><rect x="406.9" y="385.9" width="2" height="2" fill="#9c9400"/><rect x="368.9" y="392.3" width="2" height="2" fill="#9c9400"/><circle cx="470.9" cy="391.8" r="2.6" fill="#ffff00"/><rect x="299.0" y="394.7" width="2" height="2" fill="#9c9400"/><rect x="238.0" y="406.8" width="3.4" height="3.4" fill="#ffff00"/><rect x="251.8" y="406.3" width="2" height="2" fill="#9c9400"/><rect x="237.6" y="429.0" width="2" height="2" fill="#9c9400"/><rect x="296.0" y="429.0" width="2" height="2" fill="#9c9400"/><rect x="362.0" y="429.4" width="3.4" height="3.4" fill="#ffff00"/><rect x="312.9" y="444.0" width="2" height="2" fill="#9c9400"/><rect x="384.1" y="452.8" width="2" height="2" fill="#9c9400"/><rect x="481.3" y="437.8" width="2" height="2" fill="#9c9400"/><rect x="351.3" y="470.3" width="3.4" height="3.4" fill="#ffff00"/><rect x="692.8" y="295.2" width="2" height="2" fill="#9c9400"/><rect x="722.0" y="293.9" width="2" height="2" fill="#9c9400"/><rect x="743.4" y="302.0" width="2" height="2" fill="#9c9400"/><rect x="558.9" y="316.8" width="2" height="2" fill="#9c9400"/><rect x="719.8" y="324.5" width="2" height="2" fill="#9c9400"/><rect x="669.8" y="353.7" width="2" height="2" fill="#9c9400"/><rect x="735.9" y="356.9" width="2" height="2" fill="#9c9400"/><rect x="531.9" y="368.7" width="2" height="2" fill="#9c9400"/><rect x="720.9" y="380.5" width="2" height="2" fill="#9c9400"/><rect x="767.0" y="392.3" width="2" height="2" fill="#9c9400"/><rect x="549.0" y="402.0" width="2" height="2" fill="#9c9400"/><rect x="695.8" y="398.8" width="2" height="2" fill="#9c9400"/><rect x="710.3" y="414.3" width="3.4" height="3.4" fill="#ffff00"/><rect x="628.9" y="422.6" width="2" height="2" fill="#9c9400"/><rect x="536.2" y="426.9" width="2" height="2" fill="#9c9400"/><rect x="550.3" y="425.8" width="2" height="2" fill="#9c9400"/><rect x="541.8" y="436.7" width="2" height="2" fill="#9c9400"/><rect x="569.9" y="455.0" width="2" height="2" fill="#9c9400"/><rect x="677.8" y="445.1" width="2" height="2" fill="#9c9400"/><rect x="605.3" y="468.9" width="2" height="2" fill="#9c9400"/><rect x="747.9" y="447.4" width="2" height="2" fill="#9c9400"/><rect x="772.8" y="451.7" width="2" height="2" fill="#9c9400"/><rect x="782.0" y="462.5" width="2" height="2" fill="#9c9400"/><circle cx="846.3" cy="300.0" r="2.6" fill="#ffff00"/><rect x="897.8" y="297.5" width="2" height="2" fill="#9c9400"/><rect x="894.4" y="303.7" width="2" height="2" fill="#9c9400"/><circle cx="884.7" cy="330.9" r="6" fill="#ffff00"/><rect x="815.7" y="332.0" width="2" height="2" fill="#9c9400"/><rect x="1000.1" y="302.0" width="2" height="2" fill="#9c9400"/><circle cx="1031.4" cy="316.7" r="4.2" fill="#ffff00"/><rect x="1075.9" y="340.6" width="2" height="2" fill="#9c9400"/><rect x="847.0" y="373.9" width="2" height="2" fill="#9c9400"/><rect x="1056.1" y="369.8" width="2" height="2" fill="#9c9400"/><rect x="1060.4" y="382.7" width="2" height="2" fill="#9c9400"/><rect x="897.8" y="398.8" width="2" height="2" fill="#9c9400"/><rect x="853.4" y="404.3" width="2" height="2" fill="#9c9400"/><rect x="973.1" y="414.0" width="2" height="2" fill="#9c9400"/><circle cx="853.4" cy="433.4" r="3.8" fill="#ffff00"/><rect x="865.2" y="434.6" width="2" height="2" fill="#9c9400"/><rect x="995.9" y="429.0" width="2" height="2" fill="#9c9400"/><rect x="1026.3" y="426.2" width="3.4" height="3.4" fill="#ffff00"/><rect x="951.5" y="437.8" width="2" height="2" fill="#9c9400"/><rect x="915.8" y="445.1" width="2" height="2" fill="#9c9400"/><rect x="1145.0" y="303.0" width="3.4" height="3.4" fill="#ffff00"/><rect x="1212.7" y="318.9" width="2" height="2" fill="#9c9400"/><rect x="1216.9" y="348.0" width="2" height="2" fill="#9c9400"/><rect x="1314.9" y="311.5" width="2" height="2" fill="#9c9400"/><rect x="1318.2" y="324.5" width="2" height="2" fill="#9c9400"/><rect x="1314.9" y="331.9" width="2" height="2" fill="#9c9400"/><rect x="1306.3" y="337.2" width="2" height="2" fill="#9c9400"/><rect x="1115.9" y="382.1" width="3.4" height="3.4" fill="#ffff00"/><circle cx="1324.1" cy="388.5" r="2.6" fill="#ffff00"/><rect x="1316.4" y="409.0" width="3.4" height="3.4" fill="#ffff00"/><rect x="1342.9" y="417.0" width="2" height="2" fill="#9c9400"/><circle cx="1320.8" cy="428.3" r="2.6" fill="#ffff00"/><rect x="1199.9" y="428.2" width="3.4" height="3.4" fill="#ffff00"/><rect x="1234.1" y="430.0" width="2" height="2" fill="#9c9400"/><rect x="1092.0" y="461.5" width="2" height="2" fill="#9c9400"/><rect x="1146.6" y="467.9" width="2" height="2" fill="#9c9400"/><rect x="1212.7" y="463.5" width="2" height="2" fill="#9c9400"/><rect x="463.9" y="492.7" width="2" height="2" fill="#9c9400"/><rect x="442.5" y="514.2" width="2" height="2" fill="#9c9400"/><rect x="335.9" y="521.9" width="2" height="2" fill="#9c9400"/><rect x="388.6" y="524.9" width="2" height="2" fill="#9c9400"/><rect x="358.4" y="533.7" width="2" height="2" fill="#9c9400"/><rect x="200.7" y="524.9" width="2" height="2" fill="#9c9400"/><rect x="210.6" y="538.0" width="2" height="2" fill="#9c9400"/><rect x="457.7" y="550.9" width="2" height="2" fill="#9c9400"/><rect x="353.0" y="565.9" width="2" height="2" fill="#9c9400"/><rect x="369.1" y="564.8" width="2" height="2" fill="#9c9400"/><rect x="374.7" y="567.0" width="2" height="2" fill="#9c9400"/><rect x="387.5" y="562.9" width="2" height="2" fill="#9c9400"/><rect x="317.4" y="576.8" width="2" height="2" fill="#9c9400"/><rect x="246.0" y="585.4" width="2" height="2" fill="#9c9400"/><rect x="387.5" y="583.0" width="2" height="2" fill="#9c9400"/><rect x="428.3" y="583.0" width="2" height="2" fill="#9c9400"/><rect x="480.2" y="582.0" width="2" height="2" fill="#9c9400"/><rect x="395.9" y="599.6" width="2" height="2" fill="#9c9400"/><rect x="278.6" y="629.8" width="2" height="2" fill="#9c9400"/><rect x="282.9" y="627.7" width="2" height="2" fill="#9c9400"/><rect x="279.7" y="636.0" width="2" height="2" fill="#9c9400"/><rect x="302.2" y="636.0" width="2" height="2" fill="#9c9400"/><rect x="323.0" y="630.9" width="2" height="2" fill="#9c9400"/><rect x="315.0" y="643.7" width="2" height="2" fill="#9c9400"/><rect x="473.8" y="633.0" width="2" height="2" fill="#9c9400"/><rect x="426.2" y="647.0" width="2" height="2" fill="#9c9400"/><rect x="642.0" y="476.4" width="2" height="2" fill="#9c9400"/><rect x="536.4" y="485.0" width="2" height="2" fill="#9c9400"/><rect x="502.9" y="501.1" width="2" height="2" fill="#9c9400"/><rect x="539.8" y="520.8" width="2" height="2" fill="#9c9400"/><rect x="530.0" y="533.7" width="2" height="2" fill="#9c9400"/><rect x="550.3" y="542.3" width="2" height="2" fill="#9c9400"/><rect x="548.0" y="549.8" width="2" height="2" fill="#9c9400"/><rect x="566.7" y="569.1" width="2" height="2" fill="#9c9400"/><rect x="580.6" y="565.9" width="2" height="2" fill="#9c9400"/><rect x="562.1" y="583.0" width="2" height="2" fill="#9c9400"/><rect x="550.3" y="592.9" width="2" height="2" fill="#9c9400"/><rect x="604.2" y="598.3" width="2" height="2" fill="#9c9400"/><rect x="646.2" y="568.0" width="2" height="2" fill="#9c9400"/><circle cx="709.9" cy="565.8" r="4.2" fill="#ffff00"/><rect x="716.6" y="573.6" width="2" height="2" fill="#9c9400"/><rect x="733.7" y="577.9" width="2" height="2" fill="#9c9400"/><rect x="735.9" y="496.0" width="2" height="2" fill="#9c9400"/><circle cx="760.0" cy="479.2" r="2.6" fill="#ffff00"/><rect x="776.9" y="514.0" width="2" height="2" fill="#9c9400"/><rect x="688.3" y="589.9" width="2" height="2" fill="#9c9400"/><rect x="662.5" y="591.8" width="2" height="2" fill="#9c9400"/><rect x="660.4" y="597.2" width="2" height="2" fill="#9c9400"/><rect x="647.5" y="606.9" width="2" height="2" fill="#9c9400"/><rect x="654.0" y="622.9" width="2" height="2" fill="#9c9400"/><rect x="740.6" y="595.4" width="3.4" height="3.4" fill="#ffff00"/><rect x="608.2" y="636.4" width="3.4" height="3.4" fill="#ffff00"/><rect x="621.8" y="633.9" width="2" height="2" fill="#9c9400"/><rect x="684.0" y="633.9" width="2" height="2" fill="#9c9400"/><rect x="565.6" y="644.8" width="2" height="2" fill="#9c9400"/><rect x="622.8" y="653.4" width="2" height="2" fill="#9c9400"/><ellipse cx="1017.2" cy="492.0" rx="3.2" ry="2.7" fill="#ffff00"/><rect x="1057.2" y="520.8" width="2" height="2" fill="#9c9400"/><rect x="818.9" y="515.3" width="2" height="2" fill="#9c9400"/><rect x="883.0" y="541.6" width="3.4" height="3.4" fill="#ffff00"/><rect x="892.3" y="542.3" width="2" height="2" fill="#9c9400"/><rect x="907.5" y="540.1" width="2" height="2" fill="#9c9400"/><rect x="967.8" y="592.9" width="2" height="2" fill="#9c9400"/><circle cx="1042.5" cy="612.1" r="4.6" fill="#ffff00"/><rect x="977.2" y="624.0" width="2" height="2" fill="#9c9400"/><rect x="1048.6" y="651.9" width="2" height="2" fill="#9c9400"/><rect x="1194.6" y="490.9" width="3.4" height="3.4" fill="#ffff00"/><rect x="1102.5" y="506.8" width="2" height="2" fill="#9c9400"/><rect x="1103.6" y="517.4" width="2" height="2" fill="#9c9400"/><ellipse cx="1096.9" cy="562.0" rx="3" ry="2.4" fill="#ffffff"/><rect x="1121.9" y="556.4" width="2" height="2" fill="#9c9400"/><rect x="1140.2" y="557.5" width="2" height="2" fill="#9c9400"/><rect x="1129.6" y="578.8" width="2" height="2" fill="#9c9400"/><rect x="1161.8" y="610.1" width="2" height="2" fill="#9c9400"/><rect x="1130.7" y="651.1" width="2" height="2" fill="#9c9400"/><rect x="1296.9" y="519.8" width="2" height="2" fill="#9c9400"/><rect x="1337.8" y="522.9" width="2" height="2" fill="#9c9400"/><rect x="1270.9" y="562.8" width="2" height="2" fill="#9c9400"/><rect x="1334.5" y="561.9" width="2" height="2" fill="#9c9400"/><rect x="1274.0" y="581.0" width="2" height="2" fill="#9c9400"/><rect x="1339.8" y="587.9" width="2" height="2" fill="#9c9400"/><rect x="1264.2" y="598.2" width="2" height="2" fill="#9c9400"/><rect x="1240.7" y="620.9" width="2" height="2" fill="#9c9400"/><rect x="1347.5" y="635.9" width="2" height="2" fill="#9c9400"/><rect x="335.7" y="663.0" width="2" height="2" fill="#9c9400"/><rect x="223.7" y="693.1" width="2" height="2" fill="#9c9400"/><rect x="259.5" y="697.0" width="3.4" height="3.4" fill="#ffff00"/><rect x="292.1" y="689.3" width="3.4" height="3.4" fill="#ffff00"/><rect x="299.9" y="683.6" width="2" height="2" fill="#9c9400"/><rect x="384.0" y="690.0" width="2" height="2" fill="#9c9400"/><rect x="395.8" y="694.5" width="2" height="2" fill="#9c9400"/><rect x="406.9" y="683.6" width="2" height="2" fill="#9c9400"/><rect x="343.4" y="711.5" width="2" height="2" fill="#9c9400"/><rect x="470.7" y="735.1" width="2" height="2" fill="#9c9400"/><rect x="247.3" y="766.4" width="2" height="2" fill="#9c9400"/><rect x="212.1" y="816.5" width="3.4" height="3.4" fill="#ffff00"/><rect x="238.6" y="839.9" width="2" height="2" fill="#9c9400"/><rect x="244.1" y="847.4" width="2" height="2" fill="#9c9400"/><rect x="301.0" y="822.7" width="2" height="2" fill="#9c9400"/><rect x="468.4" y="827.0" width="2" height="2" fill="#9c9400"/><rect x="477.0" y="831.5" width="2" height="2" fill="#9c9400"/><rect x="483.8" y="824.2" width="3.4" height="3.4" fill="#ffff00"/><rect x="499.7" y="721.0" width="2" height="2" fill="#9c9400"/><rect x="528.9" y="729.0" width="2" height="2" fill="#9c9400"/><circle cx="544.7" cy="737.5" r="4.2" fill="#ffff00"/><rect x="514.2" y="742.1" width="3.4" height="3.4" fill="#ffff00"/><rect x="583.8" y="768.9" width="2" height="2" fill="#9c9400"/><rect x="506.0" y="788.2" width="2" height="2" fill="#9c9400"/><rect x="538.7" y="798.8" width="2" height="2" fill="#9c9400"/><rect x="515.8" y="804.0" width="2" height="2" fill="#9c9400"/><rect x="579.9" y="802.4" width="3.4" height="3.4" fill="#ffff00"/><rect x="602.6" y="811.3" width="3.4" height="3.4" fill="#ffff00"/><rect x="649.6" y="751.7" width="2" height="2" fill="#9c9400"/><rect x="678.8" y="730.8" width="2" height="2" fill="#9c9400"/><rect x="721.9" y="742.8" width="2" height="2" fill="#9c9400"/><rect x="731.5" y="763.5" width="2" height="2" fill="#9c9400"/><rect x="699.0" y="773.9" width="2" height="2" fill="#9c9400"/><rect x="758.5" y="773.9" width="2" height="2" fill="#9c9400"/><rect x="681.8" y="796.8" width="2" height="2" fill="#a0a0a0"/><rect x="694.0" y="809.0" width="3.4" height="3.4" fill="#ffff00"/><rect x="706.7" y="808.8" width="2" height="2" fill="#9c9400"/><rect x="723.0" y="806.5" width="2" height="2" fill="#9c9400"/><rect x="697.2" y="841.2" width="3.4" height="3.4" fill="#ffff00"/><circle cx="625.2" cy="847.9" r="2.6" fill="#ffff00"/><rect x="902.0" y="663.0" width="2" height="2" fill="#9c9400"/><rect x="909.7" y="665.0" width="2" height="2" fill="#9c9400"/><rect x="863.0" y="673.0" width="2" height="2" fill="#9c9400"/><rect x="893.4" y="674.8" width="2" height="2" fill="#9c9400"/><rect x="868.4" y="720.1" width="2" height="2" fill="#9c9400"/><rect x="893.4" y="723.3" width="2" height="2" fill="#9c9400"/><rect x="927.8" y="717.9" width="2" height="2" fill="#9c9400"/><rect x="943.7" y="713.8" width="2" height="2" fill="#9c9400"/><rect x="883.6" y="749.2" width="2" height="2" fill="#9c9400"/><rect x="871.8" y="767.8" width="2" height="2" fill="#9c9400"/><rect x="921.3" y="779.3" width="2" height="2" fill="#9c9400"/><rect x="966.8" y="749.2" width="2" height="2" fill="#9c9400"/><rect x="953.7" y="758.9" width="2" height="2" fill="#9c9400"/><circle cx="1030.2" cy="737.5" r="4.2" fill="#ffff00"/><rect x="1039.9" y="710.4" width="2" height="2" fill="#9c9400"/><rect x="1035.6" y="720.1" width="2" height="2" fill="#9c9400"/><rect x="1062.8" y="699.7" width="2" height="2" fill="#9c9400"/><rect x="1043.3" y="778.2" width="2" height="2" fill="#9c9400"/><rect x="999.0" y="797.7" width="2" height="2" fill="#9c9400"/><rect x="983.9" y="823.6" width="2" height="2" fill="#9c9400"/><rect x="1025.8" y="831.3" width="2" height="2" fill="#9c9400"/><rect x="960.3" y="832.4" width="2" height="2" fill="#9c9400"/><rect x="788.8" y="815.0" width="2" height="2" fill="#9c9400"/><circle cx="852.2" cy="815.0" r="6" fill="#ffff00"/><rect x="867.5" y="818.1" width="2" height="2" fill="#9c9400"/><rect x="905.4" y="811.1" width="3.4" height="3.4" fill="#ffff00"/><rect x="790.0" y="846.2" width="2" height="2" fill="#9c9400"/><rect x="887.9" y="844.2" width="2" height="2" fill="#9c9400"/><rect x="990.2" y="848.5" width="2" height="2" fill="#9c9400"/><rect x="1048.7" y="653.0" width="2" height="2" fill="#9c9400"/><rect x="1121.7" y="673.0" width="2" height="2" fill="#9c9400"/><circle cx="1115.9" cy="683.5" r="2.6" fill="#ffff00"/><rect x="1133.3" y="677.3" width="3.4" height="3.4" fill="#ffff00"/><rect x="1162.1" y="681.8" width="3.4" height="3.4" fill="#ffff00"/><rect x="1187.8" y="669.6" width="2" height="2" fill="#9c9400"/><rect x="1199.8" y="673.0" width="2" height="2" fill="#9c9400"/><rect x="1161.9" y="712.9" width="2" height="2" fill="#9c9400"/><rect x="1151.0" y="729.0" width="2" height="2" fill="#9c9400"/><rect x="1084.1" y="748.1" width="2" height="2" fill="#9c9400"/><rect x="1132.1" y="745.3" width="3.4" height="3.4" fill="#ffff00"/><rect x="1134.0" y="753.7" width="2" height="2" fill="#9c9400"/><rect x="1131.7" y="763.5" width="2" height="2" fill="#9c9400"/><rect x="1102.7" y="790.3" width="2" height="2" fill="#9c9400"/><rect x="1123.1" y="791.2" width="2" height="2" fill="#9c9400"/><rect x="1229.7" y="726.7" width="2" height="2" fill="#9c9400"/><rect x="1220.0" y="749.2" width="2" height="2" fill="#9c9400"/><rect x="1218.8" y="786.8" width="2" height="2" fill="#9c9400"/><rect x="1223.4" y="817.0" width="2" height="2" fill="#9c9400"/><rect x="1173.7" y="827.9" width="2" height="2" fill="#9c9400"/><rect x="1237.4" y="835.6" width="2" height="2" fill="#9c9400"/><rect x="1261.0" y="690.9" width="2" height="2" fill="#9c9400"/><rect x="1283.7" y="695.4" width="2" height="2" fill="#9c9400"/><rect x="1282.8" y="705.0" width="2" height="2" fill="#9c9400"/><rect x="1313.9" y="690.9" width="2" height="2" fill="#9c9400"/><rect x="1337.0" y="684.8" width="2" height="2" fill="#9c9400"/><rect x="1328.0" y="742.8" width="2" height="2" fill="#9c9400"/><rect x="1311.8" y="761.0" width="2" height="2" fill="#9c9400"/><circle cx="1298.8" cy="774.2" r="6" fill="#ffff00"/><rect x="1257.9" y="813.8" width="2" height="2" fill="#9c9400"/><rect x="1299.8" y="821.8" width="2" height="2" fill="#a0a0a0"/><circle cx="1105.7" cy="846.4" r="3.8" fill="#ffff00"/><rect x="1355.2" y="739.9" width="2" height="2" fill="#9c9400"/><rect x="289" y="831" width="31.19999999999999" height="13.5" fill="#000" stroke="#6a6a6a" stroke-width="1.2"/><text x="291.3" y="842.3" font-family="Liberation Sans" font-size="11.5" fill="#d4d4dc">7h2m</text><rect x="492" y="831" width="50" height="13.5" fill="#000" stroke="#6a6a6a" stroke-width="1.2"/><text x="494.3" y="842.3" font-family="Liberation Sans" font-size="11.5" fill="#d4d4dc">7h2m20s</text><rect x="702.2" y="831" width="50.0" height="13.5" fill="#000" stroke="#6a6a6a" stroke-width="1.2"/><text x="704.5" y="842.3" font-family="Liberation Sans" font-size="11.5" fill="#d4d4dc">7h2m40s</text><rect x="921" y="831" width="31" height="13.5" fill="#000" stroke="#6a6a6a" stroke-width="1.2"/><text x="923.3" y="842.3" font-family="Liberation Sans" font-size="11.5" fill="#d4d4dc">7h3m</text><rect x="1123.6" y="831" width="49.5" height="13.5" fill="#000" stroke="#6a6a6a" stroke-width="1.2"/><text x="1125.8999999999999" y="842.3" font-family="Liberation Sans" font-size="11.5" fill="#d4d4dc">7h3m20s</text><rect x="1334.6" y="831" width="49.40000000000009" height="13.5" fill="#000" stroke="#6a6a6a" stroke-width="1.2"/><text x="1336.8999999999999" y="842.3" font-family="Liberation Sans" font-size="11.5" fill="#d4d4dc">7h3m40s</text><rect x="1340.6" y="192" width="40" height="13.3" fill="#000" stroke="#6a6a6a" stroke-width="1.2"/><text x="1342.5" y="203.3" font-family="Liberation Sans" font-weight="bold" font-size="11.5" fill="#e0d890">24°50'</text><rect x="1340.6" y="424" width="40" height="13.3" fill="#000" stroke="#6a6a6a" stroke-width="1.2"/><text x="1342.5" y="435.3" font-family="Liberation Sans" font-weight="bold" font-size="11.5" fill="#e0d890">24°45'</text><rect x="1340.6" y="655" width="40" height="13.3" fill="#000" stroke="#6a6a6a" stroke-width="1.2"/><text x="1342.5" y="666.3" font-family="Liberation Sans" font-weight="bold" font-size="11.5" fill="#e0d890">24°40'</text><rect x="1376.3" y="108" width="4" height="744" fill="#000"/><rect x="197" y="108" width="35.5" height="33" fill="#000"/><rect x="236" y="109" width="44.2" height="15.3" fill="#ffc0c0"/><text x="258.1" y="121.3" text-anchor="middle" font-family="Liberation Sans" font-size="11.5" fill="#a00000">Field</text><rect x="282.5" y="109" width="44" height="15.3" fill="#808080"/><text x="304.5" y="121.3" text-anchor="middle" font-family="Liberation Sans" font-size="11.5" fill="#e8e8e8">Horizon</text><rect x="1290" y="110.7" width="39.5" height="12.5" fill="#808080"/><text x="1309.7" y="121.2" text-anchor="middle" font-family="Liberation Sans" font-size="10.5" fill="#e8e080">UCAC4</text><rect x="1329.5" y="110.7" width="47" height="12.5" fill="#008000"/><text x="1353" y="121.2" text-anchor="middle" font-family="Liberation Sans" font-size="10.5" fill="#e8e080">RNGCIC</text><circle cx="214" cy="124" r="14" fill="#000090" stroke="#a8a8c0" stroke-width="1.1"/><path d="M214 124V111" stroke="#c0b070" stroke-width="1.2"/><path d="M214 124H227" stroke="#d06080" stroke-width="1.2"/><path d="M214 107.3L216.6 110.6H211.4Z M214 140.7L216.6 137.4H211.4Z M197.5 124L200.8 121.4V126.6Z M230.5 124L227.2 121.4V126.6Z" fill="#30e0f0"/><path d="M781.5 476L793.8 487M793.8 476L781.5 487" stroke="#a0a0a0" stroke-width="1.3"/><circle cx="817.4" cy="563.2" r="8.2" fill="none" stroke="#f01010" stroke-width="2"/><path d="M812.3 558.1L814.6 560.4M822.5 558.1L820.2 560.4M812.3 568.3L814.6 566M822.5 568.3L820.2 566" stroke="#f01010" stroke-width="1.8"/><path d="M807 579.3V591.5M807 604.5V617.3" stroke="#d0c850" stroke-width="1.8"/><path d="M788.5 598.3H826.5" stroke="#d8d060" stroke-width="1.4"/><circle cx="797.8" cy="598" r="8.2" fill="none" stroke="#c8c8c8" stroke-width="1.9"/><path d="M792.3 592.5L794.8 595M803.3 592.5L800.8 595M792.3 603.5L794.8 601M803.3 603.5L800.8 601" stroke="#c8c8c8" stroke-width="1.5"/><circle cx="798" cy="598.2" r="1.1" fill="#30d030"/><ellipse cx="807.6" cy="599.5" rx="2.2" ry="1.8" fill="#f0e000"/><text x="815" y="602.3" font-family="Liberation Sans" font-weight="bold" font-size="12" fill="#c8c8c8" textLength="124.6" lengthAdjust="spacingAndGlyphs">04/13/2024 20:45:01 UT</text></svg><!--/CH-->

<!-- status --><!--ST--><svg class="a" style="left:195px;top:852px" width="1185" height="21" viewBox="195 852 1185 21"><text x="196.3" y="870.5" font-family="Liberation Sans" font-size="13" fill="#000">RA:</text><path d="M218.0 873V856.6H237" stroke="#8a8a8a" stroke-width="1.2" fill="none"/><text x="234.5" y="870.5" text-anchor="end" font-family="Liberation Sans" font-size="13" fill="#9a1414">07</text><path d="M238.6 873V856.6H257.9" stroke="#8a8a8a" stroke-width="1.2" fill="none"/><text x="255.39999999999998" y="870.5" text-anchor="end" font-family="Liberation Sans" font-size="13" fill="#9a1414">02</text><path d="M259.1 873V856.6H277.5" stroke="#8a8a8a" stroke-width="1.2" fill="none"/><text x="275.0" y="870.5" text-anchor="end" font-family="Liberation Sans" font-size="13" fill="#9a1414">46</text><text x="283.3" y="870.5" font-family="Liberation Sans" font-size="13" fill="#000">DE:</text><path d="M305.6 873V856.6H329.6" stroke="#8a8a8a" stroke-width="1.2" fill="none"/><text x="327.1" y="870.5" text-anchor="end" font-family="Liberation Sans" font-size="13" fill="#9a1414">+24</text><path d="M331.1 873V856.6H350" stroke="#8a8a8a" stroke-width="1.2" fill="none"/><text x="347.5" y="870.5" text-anchor="end" font-family="Liberation Sans" font-size="13" fill="#9a1414">43</text><path d="M351.6 873V856.6H370" stroke="#8a8a8a" stroke-width="1.2" fill="none"/><text x="367.5" y="870.5" text-anchor="end" font-family="Liberation Sans" font-size="13" fill="#9a1414">55</text><text x="374.8" y="870.5" font-family="Liberation Sans" font-size="13" fill="#000" textLength="25.5" lengthAdjust="spacingAndGlyphs">Field:</text><path d="M403.6 873V856.6H428.7" stroke="#8a8a8a" stroke-width="1.2" fill="none"/><text x="426.2" y="870.5" text-anchor="end" font-family="Liberation Sans" font-size="13" fill="#9a1414">00</text><path d="M430.1 873V856.6H448.6" stroke="#8a8a8a" stroke-width="1.2" fill="none"/><text x="446.1" y="870.5" text-anchor="end" font-family="Liberation Sans" font-size="13" fill="#9a1414">25</text><path d="M450.90000000000003 873V856.6H469" stroke="#8a8a8a" stroke-width="1.2" fill="none"/><text x="466.5" y="870.5" text-anchor="end" font-family="Liberation Sans" font-size="13" fill="#9a1414">21</text><circle cx="481.2" cy="864.3" r="7" fill="#20d020" stroke="#1a8a1a" stroke-width="0.8"/><circle cx="481.7" cy="864.8" r="4.5" fill="#30f030"/><circle cx="479.2" cy="861.8" r="1.6" fill="#d8ffd8"/><circle cx="496.3" cy="864.3" r="7" fill="#20d020" stroke="#1a8a1a" stroke-width="0.8"/><circle cx="496.8" cy="864.8" r="4.5" fill="#30f030"/><circle cx="494.3" cy="861.8" r="1.6" fill="#d8ffd8"/><rect x="508.5" y="854.5" width="112.5" height="12" fill="#ff1010"/><text x="564.7" y="865" text-anchor="middle" font-family="Liberation Sans" font-weight="bold" font-size="11.5" fill="#fff8c0" textLength="108" lengthAdjust="spacingAndGlyphs">04/13/2024 20:45:01</text><text x="565" y="873" text-anchor="middle" font-family="Liberation Sans" font-size="8.5" fill="#222">+8°25'35'' / +46°49'0''</text><ellipse cx="634" cy="864" rx="8.3" ry="8.8" fill="#f8f890"/><ellipse cx="632" cy="864" rx="7.6" ry="8.8" fill="#000080"/><path d="M655 857H711.5M655 867.7H711.5" stroke="#a0a0a0" stroke-width="2.2"/><path d="M655 856H711.5M655 866.7H711.5" stroke="#707070" stroke-width="0.6"/><path d="M684.2 860.5V855.3H686.3V857" stroke="#808080" stroke-width="1.6" fill="none"/><path d="M658 873V866.5H660" stroke="#808080" stroke-width="1.6" fill="none"/><rect x="725" y="854.8" width="18.8" height="18.2" fill="#c8f4c8"/><path d="M743.6 855V873" stroke="#707070" stroke-width="1.2"/><path d="M728.8 864.5H739.8M734.3 859V870" stroke="#1010a0" stroke-width="2.2"/><rect x="745.8" y="854.8" width="17.6" height="18.2" fill="#c8f4c8"/><path d="M763.2 855V873M745.8 855V873" stroke="#707070" stroke-width="1.2"/><path d="M749.2 864.5H759.8" stroke="#1010a0" stroke-width="2.2"/><rect x="766" y="854.8" width="90" height="18.2" fill="#e0e0e0"/><text x="768.3" y="864" font-family="Liberation Sans" font-size="10" fill="#9a1414" textLength="82.5" lengthAdjust="spacingAndGlyphs">JD: 2460414.36459</text><text x="768.3" y="873.5" font-family="Liberation Sans" font-size="10" fill="#9a1414">ST: 10:48:50</text><path d="M1251.4 873V856.6H1380" stroke="#7a7a7a" stroke-width="1.6" fill="none"/><text x="1256" y="870" font-family="Liberation Sans" font-size="12.5" fill="#206a20" textLength="119" lengthAdjust="spacingAndGlyphs">07h01m52s  +24°38'30''</text></svg><!--/ST-->

</body></html>
